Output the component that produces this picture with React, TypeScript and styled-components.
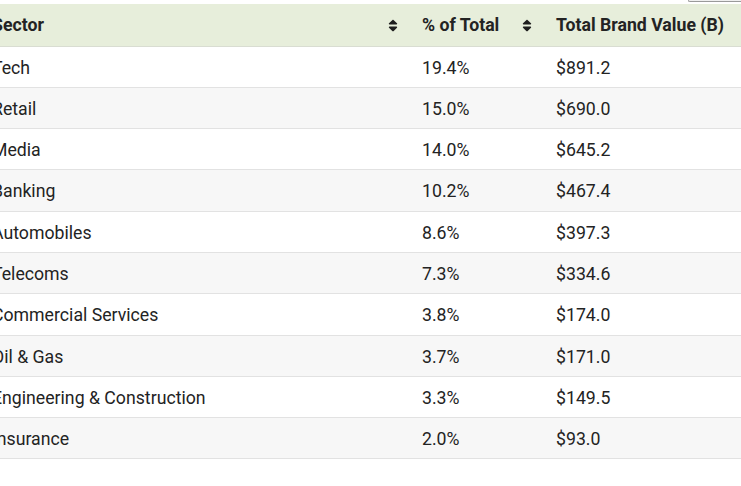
import React from 'react';
import styled, { createGlobalStyle } from 'styled-components';
import { FaSort } from 'react-icons/fa';

const GlobalStyle = createGlobalStyle`
  html, body {
    margin: 0;
    padding: 0;
    background: #fff;
    overflow: hidden;
    font-family: Roboto, 'Liberation Sans', Arial, sans-serif;
  }
`;

const Page = styled.div`
  width: 741px;
  overflow: hidden;
`;

const Toolbar = styled.div`
  display: flex;
  justify-content: flex-end;
  height: 4px;
`;

const ExportButton = styled.div`
  width: 52px;
  height: 1px;
  background: #efefef;
  border: 1px solid #9a9a9a;
  border-top: none;
  border-right: none;
  border-radius: 0 0 0 3px;
`;

const Table = styled.table`
  margin-left: -20px;
  width: 830px;
  border-collapse: collapse;
  table-layout: fixed;
  color: #232323;
  font-size: 17.7px;
`;

const HeadCell = styled.th<{ $width: number }>`
  width: ${p => p.$width}px;
  height: 42px;
  padding: 1px 12px 0;
  background: #e7eedb;
  border-bottom: 1px solid #d9ddd2;
  text-align: left;
  font-weight: 700;
  box-sizing: border-box;
  white-space: nowrap;
`;

const HeadInner = styled.div`
  display: flex;
  align-items: center;
  justify-content: space-between;
  gap: 8px;

  svg {
    flex-shrink: 0;
    width: 10px;
    height: 15px;
    color: #1e1e1e;
  }
`;

const Row = styled.tr<{ $alt: boolean }>`
  background: ${p => (p.$alt ? '#f7f7f7' : '#ffffff')};
`;

const Cell = styled.td`
  padding: 11px 12px 8.5px;
  line-height: 20.8px;
  border-bottom: 1px solid #e2e2e2;
  white-space: nowrap;
`;

const sectors = [
  { name: 'Tech', share: '19.4%', value: '$891.2' },
  { name: 'Retail', share: '15.0%', value: '$690.0' },
  { name: 'Media', share: '14.0%', value: '$645.2' },
  { name: 'Banking', share: '10.2%', value: '$467.4' },
  { name: 'Automobiles', share: '8.6%', value: '$397.3' },
  { name: 'Telecoms', share: '7.3%', value: '$334.6' },
  { name: 'Commercial Services', share: '3.8%', value: '$174.0' },
  { name: 'Oil & Gas', share: '3.7%', value: '$171.0' },
  { name: 'Engineering & Construction', share: '3.3%', value: '$149.5' },
  { name: 'Insurance', share: '2.0%', value: '$93.0' },
];

export default function App() {
  return (
    <Page>
      <GlobalStyle />
      <Toolbar>
        <ExportButton />
      </Toolbar>
      <Table>
        <thead>
          <tr>
            <HeadCell $width={430}>
              <HeadInner>Sector <FaSort /></HeadInner>
            </HeadCell>
            <HeadCell $width={134}>
              <HeadInner>% of Total <FaSort /></HeadInner>
            </HeadCell>
            <HeadCell $width={266}>
              <HeadInner>Total Brand Value (B) <FaSort /></HeadInner>
            </HeadCell>
          </tr>
        </thead>
        <tbody>
          {sectors.map((s, i) => (
            <Row key={s.name} $alt={i % 2 === 1}>
              <Cell>{s.name}</Cell>
              <Cell>{s.share}</Cell>
              <Cell>{s.value}</Cell>
            </Row>
          ))}
        </tbody>
      </Table>
    </Page>
  );
}
